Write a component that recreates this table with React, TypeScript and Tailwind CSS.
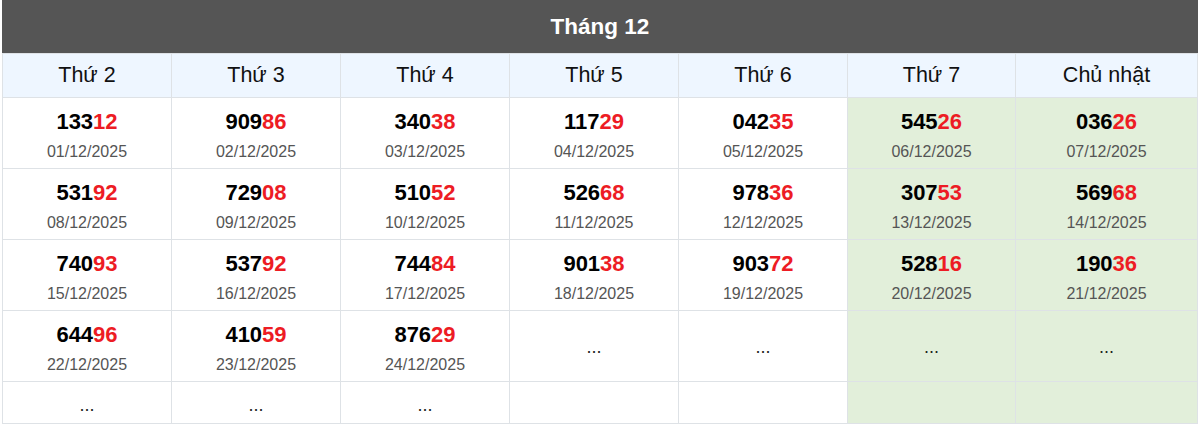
const DAYS = ["Thứ 2", "Thứ 3", "Thứ 4", "Thứ 5", "Thứ 6", "Thứ 7", "Chủ nhật"];

type Cell = { num: string; date: string } | null | "empty";

// each week row, Mon..Sun; null = "..." placeholder, "empty" = blank cell
const WEEKS: Cell[][] = [
  [
    { num: "13312", date: "01/12/2025" },
    { num: "90986", date: "02/12/2025" },
    { num: "34038", date: "03/12/2025" },
    { num: "11729", date: "04/12/2025" },
    { num: "04235", date: "05/12/2025" },
    { num: "54526", date: "06/12/2025" },
    { num: "03626", date: "07/12/2025" },
  ],
  [
    { num: "53192", date: "08/12/2025" },
    { num: "72908", date: "09/12/2025" },
    { num: "51052", date: "10/12/2025" },
    { num: "52668", date: "11/12/2025" },
    { num: "97836", date: "12/12/2025" },
    { num: "30753", date: "13/12/2025" },
    { num: "56968", date: "14/12/2025" },
  ],
  [
    { num: "74093", date: "15/12/2025" },
    { num: "53792", date: "16/12/2025" },
    { num: "74484", date: "17/12/2025" },
    { num: "90138", date: "18/12/2025" },
    { num: "90372", date: "19/12/2025" },
    { num: "52816", date: "20/12/2025" },
    { num: "19036", date: "21/12/2025" },
  ],
  [
    { num: "64496", date: "22/12/2025" },
    { num: "41059", date: "23/12/2025" },
    { num: "87629", date: "24/12/2025" },
    null,
    null,
    null,
    null,
  ],
  [null, null, null, "empty", "empty", "empty", "empty"],
];

const COLS = "grid-cols-[169px_169px_169px_169px_169px_168px_182px]";

function DataCell({ cell, weekend, last }: { cell: Cell; weekend: boolean; last: boolean }) {
  const bg = weekend ? "bg-[#e2efda]" : "bg-white";
  return (
    <div
      className={`border-l border-t border-[#dee2e6] ${bg} ${last ? "h-[42px]" : "h-[71px]"} flex flex-col items-center justify-center`}
    >
      {cell === "empty" ? null : cell === null ? (
        <span className={`text-[18px] leading-none text-[#222] ${last ? "mt-[4px]" : "mt-[2px]"}`}>...</span>
      ) : (
        <>
          <div className="text-[22px] font-bold leading-[26px] text-black mt-[4px]">
            {cell.num.slice(0, 3)}
            <span className="text-[#ed1c24]">{cell.num.slice(3)}</span>
          </div>
          <div className="text-[16px] leading-[19px] text-[#555] mt-[7px]">{cell.date}</div>
        </>
      )}
    </div>
  );
}

export default function App() {
  return (
    <div className="w-[1200px] h-[426px] bg-white px-[2px] font-['Liberation_Sans',Arial,sans-serif]">
      <div className="w-[1196px]">
        <div className="h-[53px] bg-[#555555] text-white text-[22.5px] font-bold flex items-center justify-center pt-[1px]">
          Tháng 12
        </div>
        <div className={`grid ${COLS} border-r border-b border-[#dee2e6]`}>
          {DAYS.map((d) => (
            <div
              key={d}
              className="h-[44px] border-l border-t border-[#dee2e6] bg-[#eef6ff] flex items-center justify-center text-[21.5px] text-[#111]"
            >
              {d}
            </div>
          ))}
          {WEEKS.map((week, wi) =>
            week.map((cell, ci) => (
              <DataCell
                key={`${wi}-${ci}`}
                cell={cell}
                weekend={ci >= 5}
                last={wi === WEEKS.length - 1}
              />
            )),
          )}
        </div>
      </div>
    </div>
  );
}
